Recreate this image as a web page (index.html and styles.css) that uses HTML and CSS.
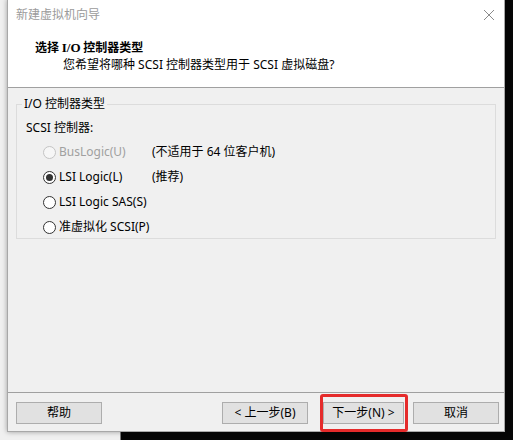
FILE: index.html
```html
<!DOCTYPE html>
<html lang="zh-CN">
<head>
<meta charset="utf-8">
<title>新建虚拟机向导</title>
<link rel="stylesheet" href="styles.css">
</head>
<body>
<div class="desktop">
  <div class="back-window"></div>

  <div class="dialog">
    <div class="titlebar">
      <span class="title">新建虚拟机向导</span>
      <svg class="close" width="12" height="12" viewBox="0 0 12 12" aria-hidden="true">
        <path d="M1 1 L11 11 M11 1 L1 11" stroke="#8a8a8a" stroke-width="1" fill="none"/>
      </svg>
    </div>

    <div class="header">
      <div class="heading">选择 <span class="latin">I/O</span> 控制器类型</div>
      <div class="subheading">您希望将哪种 SCSI 控制器类型用于 SCSI 虚拟磁盘?</div>
    </div>

    <div class="main">
      <fieldset class="group">
        <legend>I/O 控制器类型</legend>
        <div class="group-caption">SCSI 控制器:</div>
        <div class="options">
          <div class="option disabled">
            <span class="radio"></span>
            <span class="option-label">BusLogic(U)</span>
            <span class="option-note">(不适用于 64 位客户机)</span>
          </div>
          <div class="option">
            <span class="radio checked"></span>
            <span class="option-label">LSI Logic(L)</span>
            <span class="option-note">(推荐)</span>
          </div>
          <div class="option">
            <span class="radio"></span>
            <span class="option-label">LSI Logic SAS(S)</span>
          </div>
          <div class="option">
            <span class="radio"></span>
            <span class="option-label">准虚拟化 SCSI(P)</span>
          </div>
        </div>
      </fieldset>
    </div>

    <div class="footer">
      <button class="btn">帮助</button>
      <div class="spacer"></div>
      <button class="btn">&lt; 上一步(B)</button>
      <button class="btn btn-next">下一步(N) &gt;</button>
      <button class="btn">取消</button>
    </div>
  </div>

  <div class="highlight"></div>
</div>
</body>
</html>
```

FILE: styles.css
```css
* {
  box-sizing: border-box;
}

html, body {
  margin: 0;
  padding: 0;
}

body {
  width: 513px;
  height: 440px;
  overflow: hidden;
  background: #000;
  font-family: "Noto Sans", "Noto Sans CJK SC", sans-serif;
  font-size: 12px;
  color: #000;
}

.desktop {
  position: relative;
  width: 513px;
  height: 440px;
  background: #050505;
}

/* window sitting behind the wizard */
.back-window {
  position: absolute;
  left: 0;
  top: 0;
  width: 121px;
  height: 440px;
  background: #f0f0f0;
  border-right: 1px solid #7a7a7a;
}

.dialog {
  position: absolute;
  left: 7px;
  top: -1px;
  width: 498px;
  height: 433px;
  display: flex;
  flex-direction: column;
  background: #f0f0f0;
  border: 1px solid #a8a8a8;
  box-shadow: 0 0 5px rgba(0, 0, 0, 0.35);
}

.titlebar {
  height: 30px;
  flex: none;
  display: flex;
  align-items: center;
  justify-content: space-between;
  padding: 0 9px 0 8px;
  background: #fff;
}

.title {
  color: #9b9b9b;
  line-height: 16px;
}

.close {
  display: block;
}

.header {
  height: 58px;
  flex: none;
  padding: 9px 0 0 27px;
  background: #fff;
  border-bottom: 1px solid #a0a0a0;
}

.heading {
  font-weight: bold;
  line-height: 16px;
  font-family: "Noto Sans CJK SC", sans-serif;
}

.heading .latin {
  font-family: "Liberation Serif", serif;
  font-size: 13px;
}

.subheading {
  margin-top: 1px;
  margin-left: 28px;
  line-height: 16px;
}

.main {
  flex: 1;
  padding: 8px 8px 0 8px;
}

.group {
  margin: 0;
  padding: 0 0 0 9px;
  height: 143px;
  border: 1px solid #dcdcdc;
  border-radius: 0;
}

.group legend {
  margin-left: -4px;
  padding: 0 2px;
  line-height: 16px;
}

.group-caption {
  margin-top: 8px;
  line-height: 16px;
}

.options {
  margin-top: 5px;
  display: flex;
  flex-direction: column;
  gap: 3px;
}

.option {
  height: 22px;
  display: flex;
  align-items: center;
  padding-left: 17px;
}

.radio {
  width: 13px;
  height: 13px;
  flex: none;
  border: 1px solid #333;
  border-radius: 50%;
  background: #fff;
  display: flex;
  align-items: center;
  justify-content: center;
}

.radio.checked::after {
  content: "";
  width: 7px;
  height: 7px;
  border-radius: 50%;
  background: #333;
}

.option-label {
  margin-left: 3px;
  width: 93px;
  line-height: 16px;
  white-space: nowrap;
}

.option-note {
  line-height: 16px;
  white-space: nowrap;
}

.option.disabled .radio {
  border-color: #c4c4c4;
  background: #f6f6f6;
}

.option.disabled .option-label {
  color: #a0a0a0;
}

.footer {
  height: 39px;
  flex: none;
  display: flex;
  align-items: flex-start;
  padding: 9px 0 0 8px;
  border-top: 1px solid #a0a0a0;
}

.spacer {
  width: 120px;
}

.btn {
  width: 86px;
  height: 22px;
  margin: 0;
  padding: 0;
  background: #e1e1e1;
  border: 1px solid #adadad;
  font-family: inherit;
  font-size: 12px;
  color: #000;
  line-height: 18px;
}

.btn-next {
  width: 81px;
  margin-left: 15px;
  margin-right: 9px;
}

/* red annotation around the Next button */
.highlight {
  position: absolute;
  left: 320px;
  top: 394px;
  width: 88px;
  height: 38px;
  border: 3px solid #e52b2b;
  border-radius: 3px;
}
```
